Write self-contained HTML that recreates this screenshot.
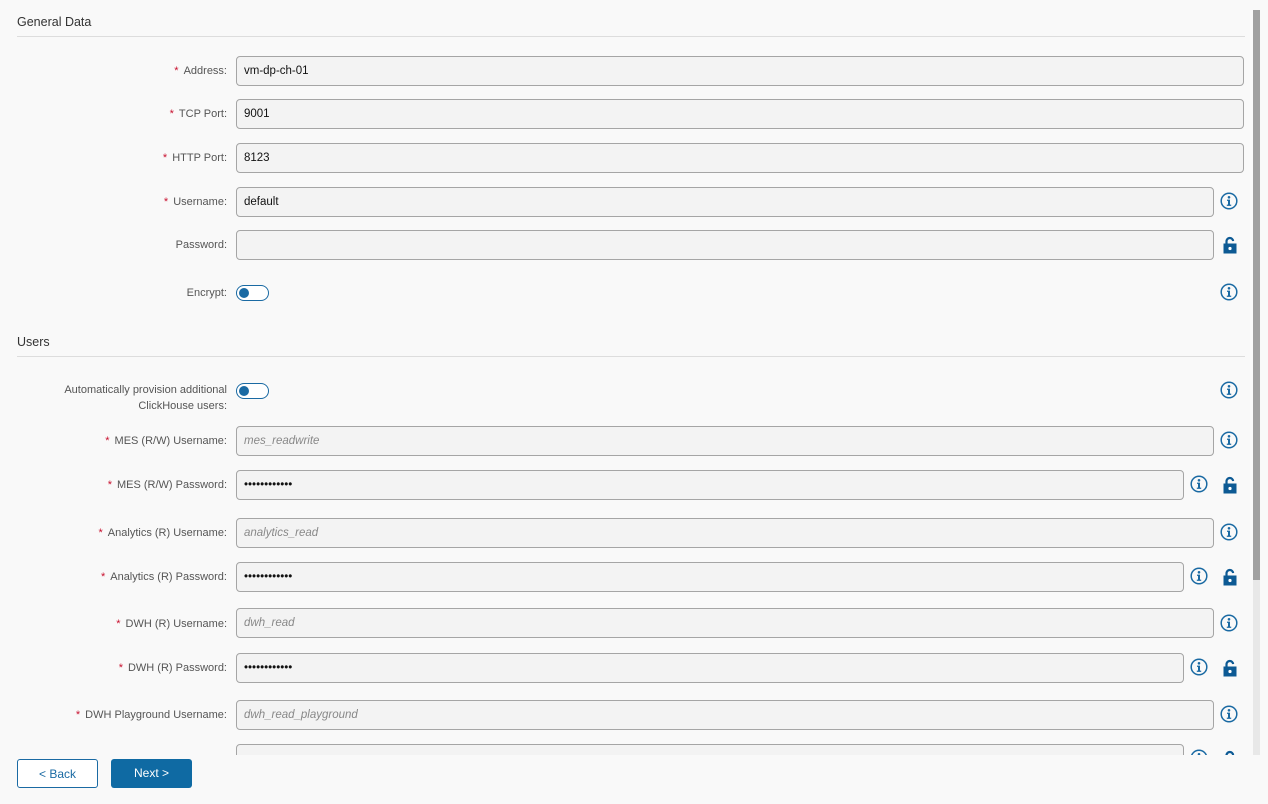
<!DOCTYPE html><html><head><style>
body{margin:0;width:1268px;height:804px;background:#f9f9f9;font-family:"Liberation Sans",sans-serif;position:relative;overflow:hidden;color:#333}
.h{position:absolute;left:17px;font-size:12.5px;color:#333}
.ln{position:absolute;left:17px;width:1228px;height:1px;background:#ddd}
.lb{position:absolute;right:1041px;font-size:11px;color:#555;text-align:right;line-height:16px}
.lb b{color:#c8102e;font-weight:normal;margin-right:5px}
.in{position:absolute;left:236px;height:28px;border:1px solid #a5a5a5;border-radius:4px;background:#f3f3f3;font-size:11.5px;line-height:28px;padding-left:7px;box-sizing:content-box;color:#111}
.ph{color:#888;font-style:italic}
.tg{position:absolute;left:236px;width:31px;height:14px;border:1.5px solid #1a6aa3;border-radius:9px;background:#fff}
.tg:after{content:"";position:absolute;left:2px;top:2px;width:10px;height:10px;border-radius:50%;background:#1a6aa3}
.ic{position:absolute;width:18px;height:18px}
.btn{position:absolute;top:759px;height:29px;border-radius:3px;font-size:12px;line-height:29px;text-align:center;box-sizing:border-box}
</style></head><body>
<div class="h" style="top:15px">General Data</div><div class="ln" style="top:36px"></div>
<div class="lb" style="top:63px"><b>*</b>Address:</div><div class="in" style="top:56px;width:999px">vm-dp-ch-01</div>
<div class="lb" style="top:106px"><b>*</b>TCP Port:</div><div class="in" style="top:99px;width:999px">9001</div>
<div class="lb" style="top:150px"><b>*</b>HTTP Port:</div><div class="in" style="top:143px;width:999px">8123</div>
<div class="lb" style="top:194px"><b>*</b>Username:</div><div class="in" style="top:187px;width:969px">default</div>
<div class="lb" style="top:237px">Password:</div><div class="in" style="top:230px;width:969px"></div>
<div class="lb" style="top:285px">Encrypt:</div><div class="tg" style="top:285px"></div>
<div class="h" style="top:335px">Users</div><div class="ln" style="top:356px"></div>
<div class="lb" style="top:382px">Automatically provision additional<br>ClickHouse users:</div><div class="tg" style="top:383px"></div>
<div class="lb" style="top:433px"><b>*</b>MES (R/W) Username:</div><div class="in ph" style="top:426px;width:969px">mes_readwrite</div>
<div class="lb" style="top:477px"><b>*</b>MES (R/W) Password:</div><div class="in" style="top:470px;width:939px">••••••••••••</div>
<div class="lb" style="top:525px"><b>*</b>Analytics (R) Username:</div><div class="in ph" style="top:518px;width:969px">analytics_read</div>
<div class="lb" style="top:569px"><b>*</b>Analytics (R) Password:</div><div class="in" style="top:562px;width:939px">••••••••••••</div>
<div class="lb" style="top:616px"><b>*</b>DWH (R) Username:</div><div class="in ph" style="top:608px;width:969px">dwh_read</div>
<div class="lb" style="top:660px"><b>*</b>DWH (R) Password:</div><div class="in" style="top:653px;width:939px">••••••••••••</div>
<div class="lb" style="top:707px"><b>*</b>DWH Playground Username:</div><div class="in ph" style="top:700px;width:969px">dwh_read_playground</div>
<div class="in" style="top:744px;width:939px"></div>
<svg width="0" height="0" style="position:absolute"><defs>
<symbol id="i" viewBox="0 0 18 18"><circle cx="9" cy="9" r="7.8" fill="none" stroke="#1a6aa3" stroke-width="1.5"/><circle cx="9" cy="5.3" r="1.3" fill="#1a6aa3"/><path d="M7 7.6h3v5h1.2v1.3H6.8v-1.3H8V8.9H7z" fill="#1a6aa3"/></symbol>
<symbol id="l" viewBox="0 0 18 18"><path d="M5.5 8V5.5a3.3 3.3 0 0 1 6.6-.4" fill="none" stroke="#0d5a94" stroke-width="2.2"/><rect x="2.5" y="7.5" width="13" height="10" fill="#0d5a94"/><circle cx="9" cy="12.5" r="1.6" fill="#fff"/></symbol></defs></svg>
<svg class="ic" style="left:1220px;top:192px"><use href="#i"/></svg>
<svg class="ic" style="left:1221px;top:236px"><use href="#l"/></svg>
<svg class="ic" style="left:1220px;top:283px"><use href="#i"/></svg>
<svg class="ic" style="left:1220px;top:381px"><use href="#i"/></svg>
<svg class="ic" style="left:1220px;top:431px"><use href="#i"/></svg>
<svg class="ic" style="left:1190px;top:475px"><use href="#i"/></svg><svg class="ic" style="left:1221px;top:476px"><use href="#l"/></svg>
<svg class="ic" style="left:1220px;top:523px"><use href="#i"/></svg>
<svg class="ic" style="left:1190px;top:567px"><use href="#i"/></svg><svg class="ic" style="left:1221px;top:568px"><use href="#l"/></svg>
<svg class="ic" style="left:1220px;top:614px"><use href="#i"/></svg>
<svg class="ic" style="left:1190px;top:658px"><use href="#i"/></svg><svg class="ic" style="left:1221px;top:659px"><use href="#l"/></svg>
<svg class="ic" style="left:1220px;top:705px"><use href="#i"/></svg>
<svg class="ic" style="left:1190px;top:749px"><use href="#i"/></svg><svg class="ic" style="left:1221px;top:750px"><use href="#l"/></svg>
<div style="position:absolute;left:1253px;top:10px;width:7px;height:745px;background:#e8e8e8"></div>
<div style="position:absolute;left:1253px;top:10px;width:7px;height:570px;background:#a0a0a0"></div>
<div style="position:absolute;left:0;top:755px;width:1268px;height:49px;background:#f9f9f9"></div>
<div class="btn" style="left:17px;width:81px;border:1px solid #1a6aa3;color:#1a6aa3;background:#fff">&lt; Back</div>
<div class="btn" style="left:111px;width:81px;background:#0f6aa3;color:#fff">Next &gt;</div>
</body></html>
